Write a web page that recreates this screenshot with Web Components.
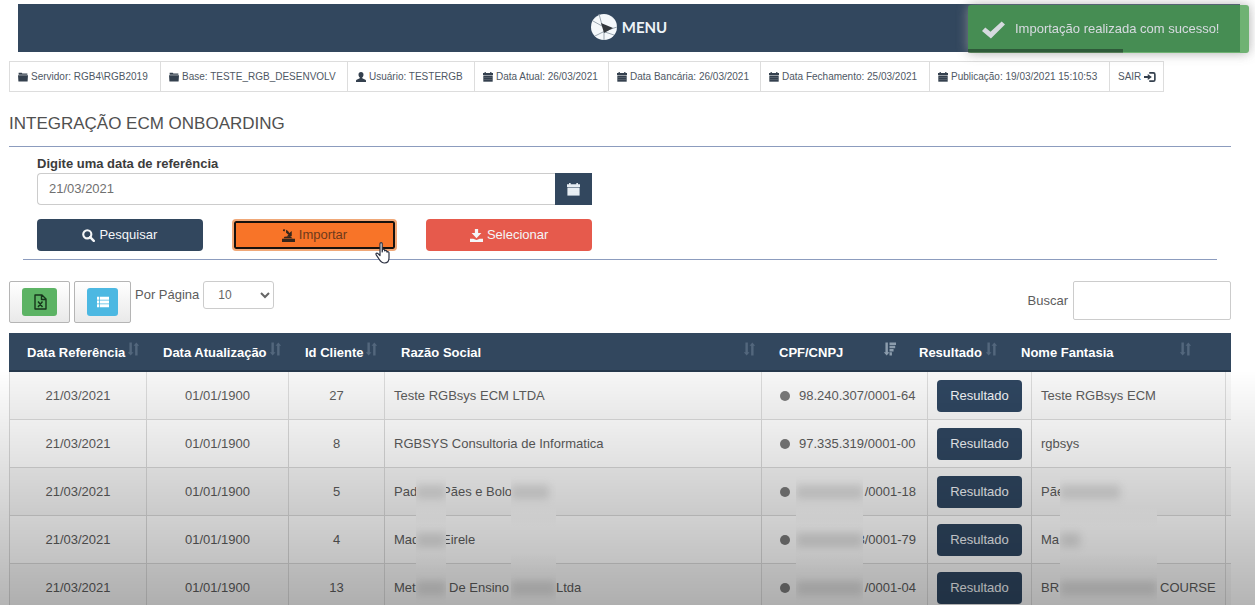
<!DOCTYPE html>
<html lang="pt-BR">
<head>
<meta charset="utf-8">
<meta name="viewport" content="width=device-width, initial-scale=1">
<title>Integração ECM Onboarding</title>
<style>
  :root { --navy: #32475e; --line: #dddddd; --rule: #8c9cbe; --text: #5c5c5c; }
  html { scrollbar-width: none; }
  body { margin: 0; background: #fff; color: var(--text); font: 13px/18px "Liberation Sans", Arial, sans-serif; }
</style>
</head>
<body>
<ecm-page></ecm-page>
<script>
const ICONS = {
  folder: '<path d="M1 1h5l1 1.500h8V4.500H1z"/><path d="M0 5h16L15.300 15H.7z"/>',
  user: '<path d="M8 0c2.600 0 4 1.900 4 4.200 0 1.900-.8 3.500-2 4.300v1.500l5 2.300c.8.400 1 1 1 1.700v2H0v-2c0-.7.200-1.300 1-1.700l5-2.300V8.500C4.800 7.700 4 6.100 4 4.200 4 1.900 5.400 0 8 0z"/>',
  calendar: '<path d="M0 1.500h2.500V0h2v1.500h7V0h2v1.500H16v3.300H0z"/><path d="M.5 5.600h15V15.500H.5z"/><path d="M1.500 8.800h13M1.500 12h13" stroke="#fff" stroke-opacity=".35" stroke-width=".7"/>',
  exit: '<path d="M7 2.500h5.500a2 2 0 0 1 2 2v7a2 2 0 0 1-2 2H7" fill="none" stroke="currentColor" stroke-width="2.200"/><path d="M0 6.800h5V4l5.500 4L5 12V9.200H0z"/>',
  search: '<circle cx="6.500" cy="6.500" r="5" fill="none" stroke="currentColor" stroke-width="2.600"/><path d="M10 10l4.500 4.500" stroke="currentColor" stroke-width="3" stroke-linecap="round"/>',
  stamp: '<path d="M0 12h16v4H0zM3 9.500L10 9l3 2.500H2zM5 1l2.500 1.500L9 5l3-2.500V9H6l2-2-3-2.500zM2 0l2 1-1 2-2-1z"/>',
  download: '<path d="M6 0h4v5h4l-6 6.500L2 5h4zM0 12h4l4 1.500L12 12h4v4H0z"/>',
  check: '<path d="M0 9L2.300 6.600l3.600 3L13.700 2.500 16 4.500 6.200 14.300z"/>',
  list: '<path d="M0 1h3v4H0zM4 1h12v4H4zM0 6h3v4H0zM4 6h12v4H4zM0 11h3v4H0zM4 11h12v4H4z"/>',
  excel: '<path d="M3 1h7l4 4v10H3zM9.500 1v4.500H14M6 7.500l4.500 5.500M10.500 7.500L6 13" fill="none" stroke="currentColor" stroke-width="1.400" stroke-linejoin="round"/>',
  sort: '<path d="M3 0h3v12h2l-3.500 4L1 12h2zM10 16h3V4h2l-3.500-4L8 4h2z"/>',
  sorted: '<path d="M3 0h3v12h2l-3.500 4L1 12h2zM8 0h8v3H8zM8 4h7v3H8zM8 8h5v3H8zM8 12h3v4H8z"/>',
  logo: '<circle cx="13" cy="13" r="13" fill="#f4f8fb"/><path d="M8 0l3 11M13 18v8M14 17l12-4M14 17L4 22M14 18l9 3M11 12L2 7" stroke="#9aa6b0" stroke-width="1" fill="none"/><path d="M10 9l12 5-9 5z" fill="#32373c"/>',
  hand: '<path d="M5 1.800c0-1.600 2.200-1.600 2.200 0V10l.3-2.200c.2-1 1.900-.9 2 .2l.2 1c.3-1 2-.9 2.100.3l.2.900c.5-.8 1.900-.6 2 .6V16c0 3-1.700 5-4.500 5C6.500 21 5.500 19.500 4 17L1.200 12.800c-.7-1.300.6-2.200 1.800-1.200L5 13.500z" fill="#fff" stroke="#2b3040" stroke-width="1.200" stroke-linejoin="round"/>'
};
const BOXES = { logo: '0 0 26 26', hand: '0 0 16 22' };

function define(name, html, setup) {
  const tpl = document.createElement('template');
  tpl.innerHTML = html;
  customElements.define(name, class extends HTMLElement {
    constructor() {
      super();
      this.attachShadow({ mode: 'open' }).append(tpl.content.cloneNode(true));
    }
    connectedCallback() { if (setup) setup(this, this.shadowRoot); }
  });
}

define('ui-icon', `<style>
  :host { display: inline-block; width: 12px; height: 12px; flex: none; }
  div { display: contents; }
  svg { display: block; width: 100%; height: 100%; fill: currentColor; }
</style><div></div>`, (el, root) => {
  const name = el.getAttribute('name');
  if (!name) return;
  root.querySelector('div').innerHTML = `<svg aria-hidden="true" viewBox="${BOXES[name] || '0 0 16 16'}">${ICONS[name]}</svg>`;
});

define('app-header', `<style>
  :host { display: block; background: var(--navy); }
  button { display: flex; width: 100%; height: 48px; align-items: center; justify-content: center; gap: 5px; padding: 0 0 2px; border: 0; background: none; color: #eef3f7; font: bold 15px/20px Lato, sans-serif; }
  ui-icon { width: 26px; height: 26px; }
</style><button type="button"><ui-icon name="logo"></ui-icon><span>MENU</span></button>`);

define('status-bar', `<style>
  :host { display: grid; grid-template-columns: 151px 187px 127px 134px 152px 169px 180px 55px; border: solid var(--line); border-width: 1px 0; width: fit-content; }
</style><slot></slot>`);

define('status-item', `<style>
  :host { display: flex; align-items: center; height: 29px; padding-left: 8px; border-left: 1px solid var(--line); color: #4f5864; font-size: 10px; line-height: 14px; white-space: nowrap; }
  :host(:last-child) { border-right: 1px solid var(--line); }
  div { display: contents; }
  span, a { display: flex; align-items: center; gap: 3px; color: inherit; text-decoration: none; }
  ui-icon { width: 10px; height: 10px; color: #34404e; }
  a ui-icon { width: 12px; height: 12px; }
</style><div></div>`, (el, root) => {
  const icon = `<ui-icon name="${el.getAttribute('icon')}"></ui-icon>`;
  root.querySelector('div').innerHTML = el.hasAttribute('href')
    ? `<a href="${el.getAttribute('href')}"><slot></slot>${icon}</a>`
    : `<span>${icon}<slot></slot></span>`;
});

define('action-button', `<style>
  :host { display: block; position: relative; color: #f4f6f8; --fill: var(--navy); }
  :host([kind=danger]) { --fill: #e65a4c; }
  :host([kind=active]) { --fill: #f87428; color: #6e3a1c; }
  button { display: flex; box-sizing: border-box; width: 100%; height: 32px; align-items: center; justify-content: center; gap: 4px; padding: 0; border: 0; border-radius: 4px; background: var(--fill); color: inherit; font: inherit; }
  :host([kind=active]) button { border: 2px solid #f0a878; box-shadow: inset 0 0 0 2px #16110e; }
  ui-icon { width: 13px; height: 13px; }
  :host([kind=active]) ui-icon { color: #35261c; }
  ::slotted([slot=pointer]) { position: absolute; right: 6px; bottom: -13px; width: 16px; height: 22px; }
</style><button type="button"><ui-icon></ui-icon><span><slot></slot></span></button><slot name="pointer"></slot>`, (el, root) => {
  const icon = document.createElement('ui-icon');
  icon.setAttribute('name', el.getAttribute('icon'));
  root.querySelector('ui-icon').replaceWith(icon);
});

define('reference-form', `<style>
  :host { display: block; margin: 0 14px; padding-bottom: 8px; border-bottom: 1px solid var(--rule); }
  form { box-sizing: border-box; width: 50%; padding: 8px 28px 0 14px; }
  label { display: block; color: #3c3c3c; font-weight: bold; }
  .field { display: flex; height: 32px; }
  input { flex: 1; min-width: 0; box-sizing: border-box; border: 1px solid #ccc; border-right: 0; border-radius: 4px 0 0 4px; padding: 0 11px; background: #fff; color: #707070; font: inherit; outline: 0; }
  .field button { display: grid; place-items: center; width: 37px; padding: 0; border: 0; background: var(--navy); color: #e6edf3; }
  .field ui-icon { width: 13px; height: 13px; }
  .actions { display: grid; grid-template-columns: repeat(3, 1fr); gap: 29px; margin-top: 14px; }
</style>
<form>
  <label for="ref">Digite uma data de referência</label>
  <div class="field"><input id="ref" type="text" value="21/03/2021"><button type="button" aria-label="Abrir calendário"><ui-icon name="calendar"></ui-icon></button></div>
  <div class="actions">
    <action-button icon="search">Pesquisar</action-button>
    <action-button icon="stamp" kind="active">Importar<ui-icon slot="pointer" name="hand"></ui-icon></action-button>
    <action-button icon="download" kind="danger">Selecionar</action-button>
  </div>
</form>`);

define('table-tools', `<style>
  :host { display: flex; align-items: flex-start; gap: 4px; }
  .tool { box-sizing: border-box; width: 61px; height: 42px; padding: 6px 12px; border: 1px solid #b5b5b5; border-radius: 2px; background: linear-gradient(#fff, #e9e9e9); }
  .tool.view { width: 57px; }
  .tool span { display: grid; place-items: center; height: 28px; border-radius: 3px; background: #5cb364; color: #16351b; }
  .tool.view span { background: #4cb8e2; color: #fff; }
  .tool ui-icon { width: 16px; height: 16px; }
  .tool.view ui-icon { width: 12px; height: 12px; }
  label { line-height: 28px; }
  select { box-sizing: border-box; width: 71px; height: 28px; padding: 0 0 0 10px; border: 1px solid #ccc; border-radius: 3px; background: #fff; color: #666; font: 12px/16px "Liberation Sans", Arial, sans-serif; }
  .search { margin-left: auto; display: flex; gap: 5px; align-items: center; }
  .search input { box-sizing: border-box; width: 158px; height: 39px; border: 1px solid #ccc; border-radius: 2px; padding: 0 8px; font: inherit; }
</style>
<button class="tool" type="button" aria-label="Exportar para Excel"><span><ui-icon name="excel"></ui-icon></span></button>
<button class="tool view" type="button" aria-label="Colunas"><span><ui-icon name="list"></ui-icon></span></button>
<label for="size">Por Página</label>
<select id="size"><option>10</option><option>25</option><option>50</option></select>
<div class="search"><label for="find">Buscar</label><input id="find" type="text"></div>`);

define('hidden-text', `<style>
  :host { display: flex; align-items: center; position: relative; z-index: 1; height: 34px; margin: -10px 0; background: var(--row); overflow: hidden; }
  :host([tall]) { height: 66px; margin: -24px 0; background: linear-gradient(var(--stripe), #fff 30%, #fff 70%, var(--stripe)); }
  i { flex: none; width: var(--ink, 100%); height: 14px; background: #8a8a8a; opacity: .26; filter: blur(4px); }
  :host([blank]) i { opacity: 0; }
</style><i></i>`);

const ROWS = [
  ['27', '<span>Teste RGBsys ECM LTDA</span>', '<span class="doc">98.240.307/0001-64</span>', '<span>Teste RGBsys ECM</span>'],
  ['8', '<span>RGBSYS Consultoria de Informatica</span>', '<span class="doc">97.335.319/0001-00</span>', '<span>rgbsys</span>'],
  ['5', '<span>Pad</span><hidden-text></hidden-text><span class="under">Pães e Bolo</span><hidden-text style="--ink:38px"></hidden-text>',
    '<hidden-text></hidden-text><span class="tail">/0001-18</span>', '<span>Pãe</span><hidden-text style="--ink:60px"></hidden-text>'],
  ['4', '<span>Mad</span><hidden-text tall></hidden-text><span class="under">Eirele</span><hidden-text tall blank></hidden-text>',
    '<hidden-text tall></hidden-text><span class="tail">3/0001-79</span>', '<span>Ma</span><hidden-text tall style="--ink:20px"></hidden-text>'],
  ['13', '<span>Met</span><hidden-text></hidden-text><span class="after">De Ensino</span><hidden-text></hidden-text><span>Ltda</span>',
    '<hidden-text></hidden-text><span class="tail">/0001-04</span>', '<span>BR</span><hidden-text></hidden-text><span class="after">COURSE</span>']
];

define('client-table', `<style>
  :host { display: block; --stripe: #f7f7f7; }
  table { width: 100%; table-layout: fixed; border-collapse: separate; border-spacing: 0; }
  th, td { padding: 0; box-sizing: border-box; }
  th { height: 39px; padding-top: 2px; background: var(--navy); border-bottom: 2px solid #26384c; color: #fff; text-align: left; }
  th div { display: flex; justify-content: space-between; padding: 0 5px 0 18px; white-space: nowrap; }
  th ui-icon { width: 13px; height: 14px; color: #53677d; align-self: flex-start; margin-top: -2px; }
  th ui-icon[name=sorted] { color: #8c9dad; }
  tbody tr { --row: #fff; }
  tbody tr:nth-child(odd) { --row: var(--stripe); }
  td { height: 48px; background: var(--row); border-left: 1px solid #dadada; border-bottom: 1px solid #dadada; white-space: nowrap; }
  .mid { text-align: center; }
  .seg { display: grid; align-items: center; }
  .name { grid-template-columns: 22px 30px 65px 45px auto; padding-left: 9px; }
  .plain { display: block; }
  .cnpj { grid-template-columns: 10px 67px 52px; padding-left: 18px; }
  .cnpj .dot { width: 10px; height: 10px; border-radius: 50%; background: #7a7a7a; }
  .cnpj hidden-text { margin-left: 6px; margin-right: -6px; }
  .doc { grid-column: 2 / 4; padding-left: 9px; }
  .tail { display: flex; justify-content: flex-end; margin-right: -7px; }
  .under { margin-left: -4px; }
  .after { padding-left: 3px; }
  .trade { grid-template-columns: 19px 97px auto; padding-left: 9px; }
  td button { display: block; width: 85px; height: 32px; margin: 0 auto; padding: 0; border: 0; border-radius: 4px; background: #2f4660; color: #f0f3f6; font: inherit; }
</style>
<table class="head"><colgroup></colgroup><thead><tr></tr></thead></table>
<table class="body"><colgroup></colgroup><tbody></tbody></table>`, (el, root) => {
  const cols = list => list.map(w => w ? `<col style="width:${w}px">` : '<col>').join('');
  const groups = root.querySelectorAll('colgroup');
  groups[0].innerHTML = cols([136, 142, 96, 0, 140, 102, 194, 34]);
  groups[1].innerHTML = cols([137, 142, 96, 0, 166, 104, 194, 6]);
  const heads = ['Data Referência', 'Data Atualização', 'Id Cliente', 'Razão Social', 'CPF/CNPJ', 'Resultado', 'Nome Fantasia'];
  root.querySelector('thead tr').innerHTML = heads.map((h, i) =>
    `<th scope="col"><div><span>${h}</span><ui-icon name="${i === 4 ? 'sorted' : 'sort'}"></ui-icon></div></th>`).join('') + '<th></th>';
  const seg = (cls, html) => `<div class="seg ${cls}${html.includes('hidden-text') || cls === 'cnpj' ? '' : ' plain'}">${html}</div>`;
  root.querySelector('tbody').innerHTML = ROWS.map(([id, name, doc, trade]) => `<tr>
    <td class="mid">21/03/2021</td><td class="mid">01/01/1900</td><td class="mid">${id}</td>
    <td>${seg('name', name)}</td><td>${seg('cnpj', '<i class="dot"></i>' + doc)}</td>
    <td><button type="button">Resultado</button></td><td>${seg('trade', trade)}</td><td></td></tr>`).join('');
});

define('toast-message', `<style>
  :host { position: fixed; z-index: 5; top: 5px; right: 6px; display: flex; align-items: center; box-sizing: border-box; width: 281px; height: 48px; gap: 10px; padding-left: 14px; border-radius: 3px; background: #4c9f51; color: #fff; opacity: .8; box-shadow: 0 0 12px #999; }
  ui-icon { width: 23px; height: 23px; }
  .progress { position: absolute; left: 0; bottom: 0; width: 55%; height: 4px; background: #000; opacity: .4; }
</style><ui-icon name="check"></ui-icon><span role="status"><slot></slot></span><div class="progress"></div>`);

define('bottom-shade', `<style>
  :host { position: fixed; z-index: 9; left: 0; right: 0; bottom: 0; height: 235px; pointer-events: none; background: linear-gradient(transparent, rgba(0, 0, 0, .29)); }
</style>`);

define('ecm-page', `<style>
  :host { display: block; padding: 4px 24px 0 9px; }
  app-header { margin: 0 -9px 9px 9px; }
  h1 { margin: 22px 0 12px; color: #505050; font-size: 17px; line-height: 20px; font-weight: normal; }
  reference-form { margin-bottom: 21px; }
  .panel { border-top: 1px solid var(--rule); }
  table-tools { margin-bottom: 10px; }
</style>
<app-header></app-header>
<status-bar>
  <status-item icon="folder">Servidor: RGB4\\RGB2019</status-item>
  <status-item icon="folder">Base: TESTE_RGB_DESENVOLV</status-item>
  <status-item icon="user">Usuário: TESTERGB</status-item>
  <status-item icon="calendar">Data Atual: 26/03/2021</status-item>
  <status-item icon="calendar">Data Bancária: 26/03/2021</status-item>
  <status-item icon="calendar">Data Fechamento: 25/03/2021</status-item>
  <status-item icon="calendar">Publicação: 19/03/2021 15:10:53</status-item>
  <status-item icon="exit" href="#sair">SAIR</status-item>
</status-bar>
<h1>INTEGRAÇÃO ECM ONBOARDING</h1>
<div class="panel"><reference-form></reference-form></div>
<table-tools></table-tools>
<client-table></client-table>
<toast-message>Importação realizada com sucesso!</toast-message>
<bottom-shade></bottom-shade>`);
</script>
</body>
</html>
